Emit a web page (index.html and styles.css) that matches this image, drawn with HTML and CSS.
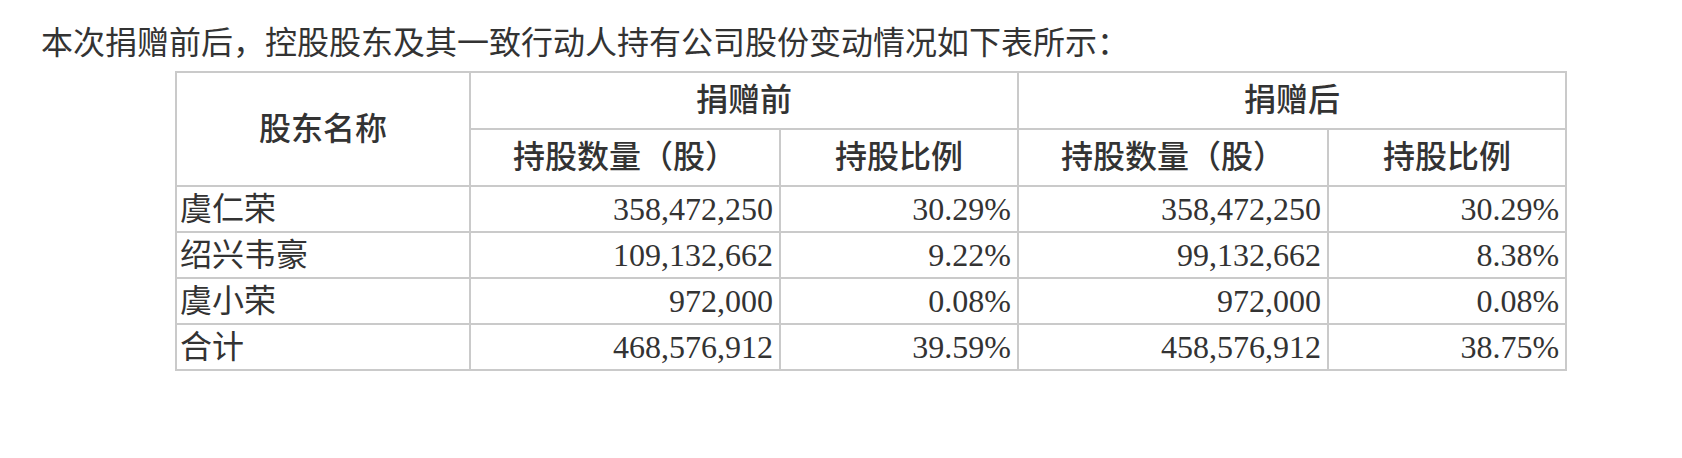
FILE: index.html
```html
<!DOCTYPE html>
<html lang="zh-CN">
<head>
<meta charset="utf-8">
<title>股份变动情况</title>
<link rel="stylesheet" href="styles.css">
</head>
<body>
<p class="intro">本次捐赠前后，控股股东及其一致行动人持有公司股份变动情况如下表所示：</p>
<table class="share-table">
  <colgroup>
    <col class="c-name">
    <col class="c-qty">
    <col class="c-pct">
    <col class="c-qty">
    <col class="c-pct">
  </colgroup>
  <thead>
    <tr class="head-row">
      <th rowspan="2">股东名称</th>
      <th colspan="2">捐赠前</th>
      <th colspan="2">捐赠后</th>
    </tr>
    <tr class="head-row">
      <th>持股数量（股）</th>
      <th>持股比例</th>
      <th>持股数量（股）</th>
      <th>持股比例</th>
    </tr>
  </thead>
  <tbody>
    <tr>
      <td class="name">虞仁荣</td>
      <td class="num">358,472,250</td>
      <td class="num">30.29%</td>
      <td class="num">358,472,250</td>
      <td class="num">30.29%</td>
    </tr>
    <tr>
      <td class="name">绍兴韦豪</td>
      <td class="num">109,132,662</td>
      <td class="num">9.22%</td>
      <td class="num">99,132,662</td>
      <td class="num">8.38%</td>
    </tr>
    <tr>
      <td class="name">虞小荣</td>
      <td class="num">972,000</td>
      <td class="num">0.08%</td>
      <td class="num">972,000</td>
      <td class="num">0.08%</td>
    </tr>
    <tr>
      <td class="name">合计</td>
      <td class="num">468,576,912</td>
      <td class="num">39.59%</td>
      <td class="num">458,576,912</td>
      <td class="num">38.75%</td>
    </tr>
  </tbody>
</table>
</body>
</html>
```

FILE: styles.css
```css
html, body {
  margin: 0;
  padding: 0;
  background: #ffffff;
}

body {
  font-family: "Liberation Serif", "Noto Sans CJK SC", serif;
  font-size: 32px;
  color: #333333;
}

.intro {
  margin: 0;
  padding: 22px 0 0 41px;
  line-height: 42px;
  white-space: nowrap;
}

.share-table {
  margin: 7px 0 0 175px;
  width: 1392px;
  table-layout: fixed;
  border-collapse: collapse;
}

.c-name { width: 294px; }
.c-qty { width: 310px; }
.c-pct { width: 238px; }

.share-table th,
.share-table td {
  border: 2px solid #cacaca;
  padding: 0;
  white-space: nowrap;
  overflow: hidden;
}

.share-table th {
  font-weight: 500;
  text-align: center;
  vertical-align: middle;
  height: 55px;
  line-height: 55px;
}

.share-table td {
  height: 44px;
  line-height: 44px;
  vertical-align: middle;
}

.share-table .name {
  text-align: left;
  padding-left: 3px;
}

.share-table .num {
  text-align: right;
  padding-right: 6px;
}
```
